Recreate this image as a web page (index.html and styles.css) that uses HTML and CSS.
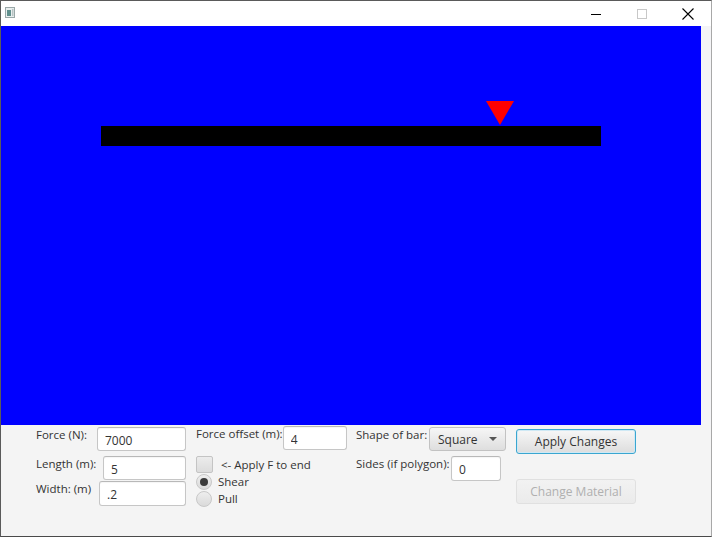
FILE: index.html
```html
<!DOCTYPE html>
<html>
<head>
<meta charset="utf-8">
<link rel="stylesheet" href="styles.css">
</head>
<body>
<div class="window">
  <div class="titlebar">
    <svg class="app-icon" width="10" height="11" viewBox="0 0 10 11">
      <rect x="0.5" y="0.5" width="9" height="10" fill="#e8eeee" stroke="#9aa8a8"/>
      <rect x="2" y="3" width="4" height="6" fill="#5f8f8c"/>
      <rect x="7" y="2" width="1.5" height="7" fill="#b8c4c4"/>
    </svg>
    <div class="caption">
      <div class="cap-btn">
        <svg width="10" height="10" viewBox="0 0 10 10"><line x1="0" y1="5.5" x2="10" y2="5.5" stroke="#000" stroke-width="1"/></svg>
      </div>
      <div class="cap-btn">
        <svg width="10" height="10" viewBox="0 0 10 10"><rect x="0.5" y="0.5" width="9" height="9" fill="none" stroke="#c8c8c8" stroke-width="1"/></svg>
      </div>
      <div class="cap-btn">
        <svg width="12" height="12" viewBox="0 0 12 12"><path d="M0.5 0.5 L11.5 11.5 M11.5 0.5 L0.5 11.5" stroke="#000" stroke-width="1.1" fill="none"/></svg>
      </div>
    </div>
  </div>
  <div class="stage">
    <svg class="canvas" width="700" height="399" viewBox="0 0 700 399">
      <rect x="0" y="0" width="700" height="399" fill="#0000ff"/>
      <rect x="100" y="100" width="500" height="20" fill="#000"/>
      <polygon points="485,75 513,75 499,99" fill="#ff0000"/>
    </svg>
    <div class="edge"></div>
  </div>
  <div class="panel">
    <div class="col">
      <div class="row r1">
        <span class="lbl">Force (N):</span>
        <input class="tf tf-force" type="text" value="7000">
      </div>
      <div class="row r2">
        <span class="lbl">Length (m):</span>
        <input class="tf tf-length" type="text" value="5">
      </div>
      <div class="row r3">
        <span class="lbl">Width: (m)</span>
        <input class="tf tf-width" type="text" value=".2">
      </div>
    </div>
    <div class="col">
      <div class="row r1b">
        <span class="lbl">Force offset (m):</span>
        <input class="tf tf-offset" type="text" value="4">
      </div>
      <div class="check-row">
        <span class="checkbox"></span>
        <span class="check-lbl">&lt;- Apply F to end</span>
      </div>
      <div class="radio-row">
        <span class="radio selected"></span>
        <span class="radio-lbl">Shear</span>
      </div>
      <div class="radio-row">
        <span class="radio"></span>
        <span class="radio-lbl">Pull</span>
      </div>
    </div>
    <div class="col">
      <div class="row r1">
        <span class="lbl">Shape of bar:</span>
        <div class="combo"><span>Square</span><span class="arrow"></span></div>
      </div>
      <div class="row r2 sides-row">
        <span class="lbl">Sides (if polygon):</span>
        <input class="tf tf-sides" type="text" value="0">
      </div>
    </div>
    <div class="col buttons">
      <div class="btn focused">Apply Changes</div>
      <div class="btn disabled">Change Material</div>
    </div>
  </div>
</div>
</body>
</html>
```
FILE: styles.css
```css
html, body {
  margin: 0;
  padding: 0;
}
body {
  width: 712px;
  height: 537px;
  overflow: hidden;
  background: #ffffff;
  font-family: "Open Sans", "Noto Sans", sans-serif;
  font-size: 11.5px;
  color: #333333;
}
.window {
  width: 712px;
  height: 537px;
  box-sizing: border-box;
  border-top: 1px solid #5a5a5a;
  border-left: 1px solid #5a5a5a;
  border-right: 1px solid #a8a8a8;
  border-bottom: 1px solid #4a4a4a;
  display: flex;
  flex-direction: column;
}
.titlebar {
  height: 25px;
  background: #ffffff;
  display: flex;
  align-items: flex-start;
}
.app-icon {
  margin: 6px 0 0 4px;
}
.caption {
  margin-left: auto;
  display: flex;
}
.cap-btn {
  width: 46px;
  height: 25px;
  display: flex;
  align-items: center;
  justify-content: center;
}
.stage {
  display: flex;
  height: 399px;
}
.canvas {
  display: block;
}
.edge {
  flex: 1;
  background: #f4f4f6;
}
.panel {
  flex: 1;
  background: #f4f4f4;
  display: grid;
  grid-template-columns: 150px 150px 150px 120px;
  column-gap: 10px;
  padding: 2px 0 0 35px;
  align-items: start;
}
.col {
  display: flex;
  flex-direction: column;
}
.row {
  display: flex;
  justify-content: space-between;
  align-items: flex-start;
}
.r1b {
  margin-top: -1px;
}
.r2 {
  margin-top: 5px;
}
.r3 {
  margin-top: 1px;
}
.lbl {
  padding-top: 0;
  line-height: 16px;
  white-space: nowrap;
}
.tf {
  box-sizing: border-box;
  height: 24px;
  margin: 0;
  padding: 2px 7px 0 7px;
  border: 1px solid #c6c6c6;
  border-top-color: #b8b8b8;
  border-radius: 3px;
  background: #ffffff;
  box-shadow: inset 0 1px 1px rgba(0,0,0,0.04);
  font: inherit;
  font-size: 12px;
  color: #333333;
  outline: none;
}
.tf-force { width: 89px; }
.tf-length { width: 83px; }
.tf-width { width: 87px; height: 25px; }
.tf-offset { width: 64px; }
.sides-row { width: 145px; }
.tf-sides { width: 50px; height: 25px; }
.check-row {
  display: flex;
  align-items: center;
  margin-top: 6px;
  height: 17px;
}
.checkbox {
  box-sizing: border-box;
  width: 17px;
  height: 17px;
  border: 1px solid #c4c4c4;
  border-radius: 2px;
  background: linear-gradient(#ececec, #dcdcdc);
}
.check-lbl {
  margin-left: 8px;
  line-height: 16px;
}
.radio-row {
  display: flex;
  align-items: center;
  height: 17px;
}
.radio {
  box-sizing: border-box;
  width: 16px;
  height: 16px;
  border-radius: 50%;
  border: 1px solid #c8c8c8;
  background: linear-gradient(#eeeeee, #dadada);
  display: flex;
  align-items: center;
  justify-content: center;
}
.radio.selected::after {
  content: "";
  width: 8px;
  height: 8px;
  border-radius: 50%;
  background: #3a3a3a;
}
.radio-lbl {
  margin-left: 6px;
  line-height: 16px;
}
.combo {
  box-sizing: border-box;
  width: 77px;
  height: 24px;
  border: 1px solid #c2c2c2;
  border-radius: 3px;
  background: linear-gradient(#f6f6f6, #dedede);
  display: flex;
  align-items: center;
  padding: 0 0 0 8px;
  font-size: 12px;
}
.arrow {
  margin-left: auto;
  margin-right: 8px;
  width: 0;
  height: 0;
  border-left: 4px solid transparent;
  border-right: 4px solid transparent;
  border-top: 4px solid #555555;
}
.buttons {
  padding-top: 2px;
}
.btn {
  box-sizing: border-box;
  width: 120px;
  height: 25px;
  border: 1px solid #c0c0c0;
  border-radius: 3px;
  background: linear-gradient(#f7f7f7, #dddddd);
  display: flex;
  align-items: center;
  justify-content: center;
  font-size: 12px;
  color: #333333;
}
.btn.focused {
  border-color: #3aa6d0;
  box-shadow: inset 0 0 0 1px #cfe9f5;
}
.btn.disabled {
  margin-top: 25px;
  background: linear-gradient(#f2f2f2, #ebebeb);
  border-color: #e0e0e0;
  color: #b0b0b0;
}
```
